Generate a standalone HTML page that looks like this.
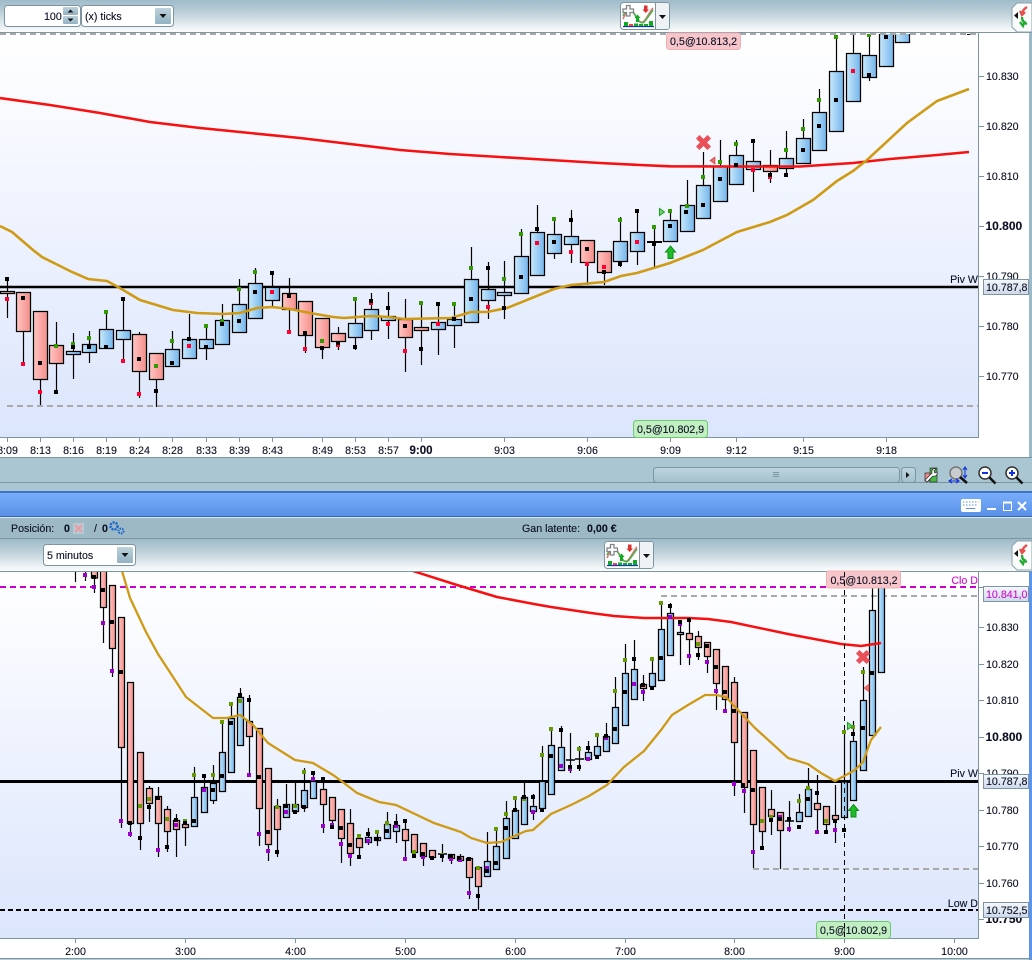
<!DOCTYPE html>
<html><head><meta charset="utf-8"><title>Chart</title>
<style>
html,body{margin:0;padding:0;background:#fff;width:1032px;height:960px;overflow:hidden}
svg{display:block}
text{font-family:"Liberation Sans",sans-serif;font-size:10.67px;fill:#0c1024;stroke:#0c1024;stroke-width:.12}
.b{font-weight:bold}
.t rect{width:14px;stroke:#000;stroke-width:1.25}
.m rect{width:6px;stroke:#000;stroke-width:1.25}
</style></head><body>
<svg width="1032" height="960" viewBox="0 0 1032 960" xmlns="http://www.w3.org/2000/svg">
<defs>
<linearGradient id="hd" x1="0" y1="0" x2="0" y2="1"><stop offset="0" stop-color="#9fbbca"/><stop offset=".35" stop-color="#b9cdd7"/><stop offset="1" stop-color="#fcfdfd"/></linearGradient>
<linearGradient id="bg" x1="0" y1="0" x2="0" y2="1"><stop offset="0" stop-color="#fff"/><stop offset="1" stop-color="#dbe5fc"/></linearGradient>
<linearGradient id="blu" x1="0" y1="0" x2="1" y2="0"><stop offset="0" stop-color="#c9e9fc"/><stop offset="1" stop-color="#74b5ec"/></linearGradient>
<linearGradient id="red" x1="0" y1="0" x2="1" y2="0"><stop offset="0" stop-color="#ffc4c2"/><stop offset="1" stop-color="#f58e8a"/></linearGradient>
<linearGradient id="ttl" x1="0" y1="0" x2="0" y2="1"><stop offset="0" stop-color="#79aefc"/><stop offset="1" stop-color="#5a90e6"/></linearGradient>
<linearGradient id="btn" x1="0" y1="0" x2="0" y2="1"><stop offset="0" stop-color="#bcd2dc"/><stop offset="1" stop-color="#92b2c2"/></linearGradient>
<linearGradient id="tag" x1="0" y1="0" x2="0" y2="1"><stop offset="0" stop-color="#f6f8fc"/><stop offset="1" stop-color="#ccd8ea"/></linearGradient>
<linearGradient id="bar" x1="0" y1="0" x2="0" y2="1"><stop offset="0" stop-color="#bdd5df"/><stop offset="1" stop-color="#a3c0cd"/></linearGradient>
<clipPath id="c1"><rect x="0" y="34" width="978" height="403"/></clipPath>
<clipPath id="c2"><rect x="0" y="572" width="978" height="366"/></clipPath>
</defs>

<!-- base -->
<rect width="1032" height="960" fill="#fff"/>
<rect x="1029" y="33" width="3" height="459" fill="#9ab8c6"/>
<rect x="0" y="0" width="1032" height="32" fill="url(#hd)"/>
<rect x="0" y="32" width="1032" height="1" fill="#7d94a1"/>
<rect x="0" y="34" width="978" height="403" fill="url(#bg)"/>
<rect x="0" y="458" width="1032" height="35" fill="#aac6d2"/>
<rect x="0" y="457" width="1032" height="1" fill="#7d94a1"/>
<rect x="0" y="482" width="1032" height="1" fill="#7d94a1"/>
<rect x="0" y="491" width="1032" height="2" fill="#3f74c4"/>
<rect x="0" y="493" width="1032" height="23" fill="url(#ttl)"/>
<rect x="0" y="516" width="1032" height="1" fill="#2f66bd"/>
<rect x="0" y="517" width="1032" height="1" fill="#dfe9f0"/>
<rect x="0" y="518" width="1032" height="20" fill="#9db9c6"/>
<rect x="0" y="538" width="1032" height="1" fill="#7d94a1"/>
<rect x="0" y="539" width="1032" height="32" fill="url(#hd)"/>
<rect x="0" y="571" width="1032" height="1" fill="#7d94a1"/>
<rect x="0" y="572" width="978" height="366" fill="url(#bg)"/>
<rect x="1029" y="572" width="3" height="388" fill="#5c94ea"/>
<rect x="0" y="958" width="1032" height="1" fill="#7d94a1"/>
<rect x="0" y="959" width="1029" height="1" fill="#b4cad4"/>
<path d="M978.500 33V437.500H0M978.500 572V938.500H0" fill="none" stroke="#7d94a3"/>

<!-- top toolbar -->
<rect x="4.500" y="5.500" width="76" height="21" rx="3" fill="#fff" stroke="#7d94a1"/>
<text x="44" y="20">100</text>
<rect x="63" y="7" width="15" height="8" rx="1" fill="url(#btn)"/><rect x="63" y="16" width="15" height="8" rx="1" fill="url(#btn)"/>
<path d="M67.500 12.500l3-3 3 3zM67.500 18.500h6l-3 3z" fill="#111"/>
<rect x="81.500" y="5.500" width="92" height="21" rx="3" fill="#fff" stroke="#7d94a1"/>
<text x="85" y="20">(x) ticks</text>
<rect x="155" y="8" width="16" height="16" rx="1" fill="url(#btn)"/>
<path d="M159.500 14h7l-3.500 4z" fill="#111"/>

<!-- indicator button top -->
<g id="ib">
<rect x="620.500" y="2.500" width="49" height="27" rx="3" fill="#fff" stroke="#7d94a1"/>
<rect x="656" y="3" width="13" height="26" rx="2" fill="#eef2f4"/><path d="M655.500 3v26" stroke="#7d94a1"/>
<path d="M659 15h7l-3.500 4z" fill="#111"/>
<path d="M623 26.500h31" stroke="#1133cc" stroke-width="1.300"/>
<path d="M624 26V22h4v4zM634 26V23.500h4v2.500zM639 26V24h4v2zM644 26V24h4v2zM649 26V21h4v5z" fill="#11aa22"/>
<path d="M629 26V24h4v2z" fill="#e44"/>
<path d="M623 19c4-10 8-12 12-4s7 9 10 5 6-10 8-12" fill="none" stroke="#e67070" stroke-width="1.600"/>
<path d="M623 16c4-9 8-8 12-1s7 10 10 6 6-8 8-11" fill="none" stroke="#4fb24f" stroke-width="1.600"/>
<path d="M626.500 5.500h3.500v3.500h3.500v3.500H630v3.500h-3.500V12.500H623V9h3.500z" fill="#fff" stroke="#7e8487" stroke-width="1.300"/>
<path d="M634.500 18l3-3.500 3 3.500h-1.500v4h-3v-4z" fill="#11aa22"/>
<path d="M644 5.500h3.500v4h1.500l-3.300 3.500-3.300-3.500h1.600z" fill="#e03030"/>
</g>
<use href="#ib" x="-16" y="539"/>

<!-- right side button top + bottom -->
<g id="sb">
<path d="M1032 3h-15l-5 5v19l5 5h15z" fill="#fafcfc" stroke="#8ba2ae"/>
<path d="M1018 12v7l-4-3.500z" fill="#111"/>
<path d="M1022 15c0-4 2-6 5-8M1020 11l2 4 3-3" fill="none" stroke="#e85050" stroke-width="2.300"/>
<path d="M1022 17c0 4 2 6 5 7M1020 22l3 4 2-5" fill="none" stroke="#22aa33" stroke-width="2.300"/>
</g>
<use href="#sb" x="0" y="538"/>

<!-- TOP CHART -->
<g clip-path="url(#c1)">
<path d="M0 287H978" stroke="#000" stroke-width="2.400"/>
<path d="M7 406H978" stroke="#a9a9a9" stroke-width="2" stroke-dasharray="6 4"/>
<g transform="translate(.5 0)"><path stroke="#000" stroke-width="1.200" fill="none" d="M7 277V318M23 332V363M40 380V405M56 322V393M73 333V379M89 331V363M106 312V329M123 298V362M139 332V398M156 354V407M172 331V350M189 314V340M206 326V360M222 304V321M239 279V305M255 268V284M272 273V306M289 278V332M305 336V353M322 348V359M338 327V350M355 299V350M371 293V340M388 292V339M405 299V372M421 303V365M438 303V355M454 303V348M471 247V280M488 262V319M504 261V319M521 229V257M537 205V233M554 217V259M571 210V263M587 263V285M604 273V285M620 217V267M637 210V265M654 225V268M670 211V221M687 180V206M703 152V186M720 140V167M736 140V156M753 140V192M770 150V183M786 131V173M803 119V139M819 89V113M836 35V72M853 33V54M869 33V81"/></g>
<path d="M647 242h15" stroke="#000" stroke-width="2"/>
<g class="t" transform="translate(-6.500 0)" fill="url(#red)">
<rect x="7" y="291.500" height="2"/><rect x="23" y="292.500" height="39"/><rect x="40" y="311.500" height="68"/><rect x="56" y="345.500" height="18"/><rect x="139" y="334.500" height="37"/><rect x="156" y="353.500" height="26"/><rect x="289" y="293.500" height="16"/><rect x="305" y="301.500" height="34"/><rect x="322" y="318.500" height="29"/><rect x="338" y="333.500" height="8"/><rect x="405" y="319.500" height="18"/><rect x="421" y="327.500" height="3"/><rect x="587" y="240.500" height="22"/><rect x="604" y="251.500" height="21"/><rect x="770" y="165.500" height="6"/>
</g>
<g class="t" transform="translate(-6.500 0)" fill="url(#blu)">
<rect x="73" y="351.500" height="3"/><rect x="89" y="344.500" height="8"/><rect x="106" y="329.500" height="19"/><rect x="123" y="330.500" height="9"/><rect x="172" y="349.500" height="17"/><rect x="189" y="339.500" height="19"/><rect x="206" y="339.500" height="9"/><rect x="222" y="320.500" height="24"/><rect x="239" y="304.500" height="28"/><rect x="255" y="283.500" height="35"/><rect x="272" y="287.500" height="13"/><rect x="355" y="323.500" height="14"/><rect x="371" y="309.500" height="21"/><rect x="388" y="316.500" height="4"/><rect x="438" y="322.500" height="7"/><rect x="454" y="319.500" height="6"/><rect x="471" y="279.500" height="43"/><rect x="488" y="289.500" height="11"/><rect x="504" y="292.500" height="3"/><rect x="521" y="256.500" height="37"/><rect x="537" y="232.500" height="43"/><rect x="554" y="234.500" height="19"/><rect x="571" y="236.500" height="8"/><rect x="620" y="241.500" height="20"/><rect x="637" y="232.500" height="19"/><rect x="670" y="220.500" height="21"/><rect x="687" y="205.500" height="26"/><rect x="703" y="185.500" height="33"/><rect x="720" y="166.500" height="35"/><rect x="736" y="155.500" height="29"/><rect x="753" y="161.500" height="8"/><rect x="786" y="158.500" height="10"/><rect x="803" y="138.500" height="25"/><rect x="819" y="112.500" height="38"/><rect x="836" y="71.500" height="60"/><rect x="853" y="53.500" height="48"/><rect x="869" y="55.500" height="22"/><rect x="886" y="25" height="41.500"/><rect x="902" y="25" height="17.500"/>
</g>
<path d="M0 98L50 105 100 113 150 122 200 128 250 133 300 138 350 144 400 150 450 154 500 157 550 160 600 163 640 165 670 166.300 735 166.500 800 166.500 853 163 890 159 937 155 969 152" fill="none" stroke="#f81010" stroke-width="2.600"/>
<path d="M0 226L12 232 33 250 42 257 72 272 88 279 107 281 118 287 140 300 173 310 197 313 223 314 240 313 257 308 272 307 290 309 310 313 333 317 344 318 371 316 389 317 404 319 451 318 471 312 487 312 507 308 554 289 571 285 604 282 621 276 637 273 670 263 703 250 737 232 770 222 787 215 813 200 837 181 853 171 867 160 907 123 937 101 969 89" fill="none" stroke="#cf9a14" stroke-width="2.600"/>
<g transform="translate(-2 0)" fill="none" stroke-width="4">
<path stroke="#339900" d="M56 346h4M73 344h4M89 338h4M106 312h4M156 366h4M172 341h4M206 326h4M222 321h4M239 289h4M255 272h4M322 341h4M355 299h4M421 303h4M454 304h4M471 268h4M504 279h4M521 234h4M554 219h4M620 220h4M654 227h4M670 211h4M687 206h4M703 177h4M720 162h4M736 144h4M786 150h4M803 129h4M819 100h4M836 37h4M869 35h4"/>
<path stroke="#ff0033" d="M7 299h4M23 364h4M40 392h4M123 361h4M139 394h4M189 346h4M272 292h4M289 332h4M305 349h4M338 345h4M371 303h4M388 324h4M405 351h4M438 324h4M488 307h4M537 243h4M571 252h4M587 264h4M604 267h4M637 242h4M753 170h4M770 177h4M853 71h4"/>
<path stroke="#000" d="M7 279h4M23 298h4M40 363h4M56 392h4M73 347h4M89 347h4M106 347h4M123 299h4M139 359h4M156 391h4M172 363h4M189 339h4M206 347h4M222 324h4M239 321h4M255 292h4M272 273h4M289 296h4M305 333h4M322 348h4M338 343h4M355 347h4M371 301h4M388 308h4M405 326h4M421 349h4M438 304h4M454 319h4M471 299h4M488 268h4M504 308h4M521 277h4M537 229h4M554 242h4M571 220h4M587 249h4M604 272h4M620 264h4M637 211h4M654 244h4M670 226h4M686 212h4M703 205h4M720 179h4M736 165h4M753 141h4M770 175h4M786 175h4M803 150h4M819 126h4M836 100h4M853 33h4M869 75h4M886 37h4M969 33h4"/>
</g>
<path d="M699.500 138.500l8 8M707.500 138.500l-8 8" stroke="#ea5058" stroke-width="5" stroke-linecap="square"/>
<path d="M715 157v7l-5-3.500z" fill="#f06a6a" stroke="#c83a3a" stroke-width=".6"/>
<path d="M659.500 208.500v7l5-3.500z" fill="#6fd66f" stroke="#1e9e1e"/>
<path d="M670.500 246l5 6h-2.500v6.500h-5V252h-2.500z" fill="#20bb28" stroke="#0c8f14"/>
</g>
<path d="M0 34H978" stroke="#a9a9a9" stroke-width="2" stroke-dasharray="6 4"/>
<rect x="666.500" y="33" width="74" height="16.500" rx="3" fill="#f7c6ca" stroke="#f0b0b6"/>
<text x="670" y="45">0,5@10.813,2</text>
<rect x="633.500" y="420.500" width="74" height="17" rx="3" fill="#c2efc2" stroke="#70c870"/>
<text x="637" y="433">0,5@10.802,9</text>
<text x="978" y="283" text-anchor="end">Piv W</text>

<!-- top axis -->
<path d="M979 76.500h5M979 126.500h5M979 176.500h5M979 226.500h5M979 276.500h5M979 326.500h5M979 376.500h5" stroke="#7d94a3"/>
<text x="986" y="80">10.830</text><text x="986" y="130">10.820</text><text x="986" y="180">10.810</text><text x="985.500" y="230" class="b" style="font-size:12px">10.800</text><text x="986" y="280">10.790</text><text x="986" y="330">10.780</text><text x="986" y="380">10.770</text>
<rect x="983.500" y="279.500" width="45" height="15" fill="url(#tag)" stroke="#7d94a6"/>
<text x="986" y="291">10.787,8</text>
<path d="M7.500 438v4M40.500 438v4M73.500 438v4M106.500 438v4M139.500 438v4M172.500 438v4M206.500 438v4M239.500 438v4M272.500 438v4M322.500 438v4M355.500 438v4M388.500 438v4M421.500 438v4M504.500 438v4M587.500 438v4M670.500 438v4M736.500 438v4M803.500 438v4M886.500 438v4" stroke="#7d94a3"/>
<g text-anchor="middle">
<text x="7.500" y="454">8:09</text><text x="40.500" y="454">8:13</text><text x="73.500" y="454">8:16</text><text x="106.500" y="454">8:19</text><text x="139.500" y="454">8:24</text><text x="172.500" y="454">8:28</text><text x="206.500" y="454">8:33</text><text x="239.500" y="454">8:39</text><text x="272.500" y="454">8:43</text><text x="322.500" y="454">8:49</text><text x="355.500" y="454">8:53</text><text x="388.500" y="454">8:57</text><text x="421" y="454" class="b" style="font-size:11.500px">9:00</text><text x="504.500" y="454">9:03</text><text x="587.500" y="454">9:06</text><text x="670.500" y="454">9:09</text><text x="736.500" y="454">9:12</text><text x="803.500" y="454">9:15</text><text x="886.500" y="454">9:18</text>
</g>

<!-- scrollbar / tools -->
<rect x="653.500" y="467.500" width="246" height="15" rx="3" fill="url(#bar)" stroke="#7d94a1"/>
<path d="M773 472.500h6M773 474.500h6M773 476.500h6" stroke="#7d94a1"/>
<rect x="901.500" y="467.500" width="14" height="15" rx="3" fill="url(#bar)" stroke="#7d94a1"/>
<path d="M906 472v6l3.500-3z" fill="#111"/>
<path d="M925 473h6v8h-6z" fill="#e88" stroke="#333" stroke-width=".7"/>
<path d="M930 468h7v14h-7z" fill="#44bb44" stroke="#333" stroke-width=".7"/>
<path d="M925 480l7-7c-1-4 2-5 4-4l-2 2 1 2 2-1c1 3-2 5-4 4l-6 6z" fill="#fff" stroke="#333" stroke-width=".8"/>
<circle cx="956" cy="473" r="6" fill="#c8ccd0" stroke="#777" stroke-width="1.500"/>
<path d="M960 477l7 6" stroke="#111" stroke-width="2.500"/>
<path d="M965 468v9M963 470l2-3 2 3M963 475l2 3 2-3M950 481h8M952 479l-3 2 3 2M956 479l3 2-3 2" fill="none" stroke="#1133dd" stroke-width="1.100"/>
<circle cx="985" cy="473" r="6" fill="#fff" stroke="#333" stroke-width="1.500"/>
<path d="M982 473h6" stroke="#1133dd" stroke-width="2"/><path d="M989.500 477.500l6 6" stroke="#111" stroke-width="2.500"/>
<circle cx="1012" cy="473" r="6" fill="#fff" stroke="#333" stroke-width="1.500"/>
<path d="M1009 473h6M1012 470v6" stroke="#1133dd" stroke-width="2"/><path d="M1016.500 477.500l6 6" stroke="#111" stroke-width="2.500"/>

<!-- title bar icons -->
<rect x="961" y="499" width="20" height="13" rx="2" fill="#fff"/>
<path d="M963 502h1.500M966 502h1.500M969 502h1.500M972 502h1.500M975 502h1.500M978 502h.5M963 505h1.500M966 505h1.500M969 505h1.500M972 505h1.500M975 505h1.500M966 508.500h9" stroke="#5a90e6"/>
<path d="M987 509h9" stroke="#fff" stroke-width="2"/>
<rect x="1003.500" y="502.500" width="8" height="8" fill="none" stroke="#fff"/><path d="M1003 502.500h9" stroke="#fff" stroke-width="2"/>
<path d="M1018 502l8 8M1026 502l-8 8" stroke="#fff" stroke-width="2"/>

<!-- position row -->
<text x="11" y="532">Posición:</text><text x="64" y="532" class="b">0</text>
<rect x="73" y="523" width="11" height="11" fill="#b5cbd5"/><path d="M75 525l7 7M82 525l-7 7" stroke="#e8a0a8" stroke-width="2.500"/>
<text x="94" y="532">/</text><text x="102" y="532" class="b">0</text>
<circle cx="114" cy="526" r="3.500" fill="none" stroke="#1a66cc" stroke-width="2.500" stroke-dasharray="2 1"/><circle cx="121" cy="531" r="2.500" fill="none" stroke="#1a66cc" stroke-width="2" stroke-dasharray="1.500 1"/>
<text x="522" y="532">Gan latente:</text><text x="587" y="532" class="b">0,00 €</text>

<!-- bottom dropdown -->
<rect x="43.500" y="544.500" width="92" height="21" rx="3" fill="#fff" stroke="#7d94a1"/>
<text x="47" y="559">5 minutos</text>
<rect x="117" y="547" width="16" height="16" rx="1" fill="url(#btn)"/>
<path d="M121.500 553h7l-3.500 4z" fill="#111"/>

<!-- BOTTOM CHART -->
<g clip-path="url(#c2)">
<path d="M0 781.500H978" stroke="#000" stroke-width="3"/>
<path d="M0 587H978" stroke="#cc00cc" stroke-width="2" stroke-dasharray="6 4"/>
<path d="M661 596H978M753 869H978" stroke="#a9a9a9" stroke-width="2" stroke-dasharray="6 4"/>
<path d="M0 910H978" stroke="#000" stroke-width="2" stroke-dasharray="5 3"/>
<g transform="translate(.5 0)"><path stroke="#000" stroke-width="1.200" fill="none" d="M75 560V582M85 560V581M94 578V593M103 607V643M112 648V677M121 747V828M130 823V837M140 823V850M149 786V822M158 787V857M167 806V852M176 814V857M185 820V846M194 767V827M204 775V788M213 765V804M222 720V753M231 702V719M240 688V698M249 695V777M259 808V846M268 844V861M277 799V857M286 784V805M295 782V814M304 768V812M313 775V782M323 778V833M332 820V828M341 838V863M350 809V866M359 835V855M368 828V845M377 830V846M387 812V825M396 814V843M405 822V858M414 852V855M423 856V866M432 857V860M442 844V862M451 854V864M460 854V862M469 857V899M478 886V910M487 832V862M496 828V847M506 801V819M515 798V811M524 782V798M533 794V820M542 746V782M551 729V746M561 726V748M570 733V773M579 746V771M588 741V760M597 735V757M606 723V737M615 677V708M625 644V674M634 640V670M643 675V701M652 660V674M661 603V630M670 603V614M680 620V665M689 618V665M698 631V660M707 656V673M716 683V710M725 699V713M734 677V796M744 787V813M753 824V868M762 831V848M771 790V835M780 830V869M789 801V832M799 794V822M808 768V790M817 775V833M826 824V832M835 785V843M844 733V818M853 721V742M863 667V701M872 588V611"/></g>
<path d="M438 854h9M566 760h9M575 759h9M785 821h9" stroke="#000" stroke-width="1.500"/>
<g class="m" transform="translate(-2.500 0)" fill="url(#red)">
<rect x="94" y="560" height="18"/><rect x="103" y="560" height="47.500"/><rect x="112" y="585.500" height="63"/><rect x="121" y="617.500" height="130"/><rect x="130" y="682.500" height="141"/><rect x="140" y="752.500" height="71"/><rect x="149" y="788.500" height="15"/><rect x="158" y="796.500" height="27"/><rect x="167" y="809.500" height="22"/><rect x="176" y="820.500" height="9"/><rect x="185" y="824.500" height="3"/><rect x="249" y="721.500" height="15"/><rect x="259" y="728.500" height="80"/><rect x="268" y="768.500" height="76"/><rect x="277" y="806.500" height="23"/><rect x="323" y="789.500" height="15"/><rect x="332" y="797.500" height="23"/><rect x="341" y="809.500" height="29"/><rect x="350" y="823.500" height="30"/><rect x="359" y="838.500" height="9"/><rect x="405" y="829.500" height="11"/><rect x="414" y="834.500" height="18"/><rect x="423" y="843.500" height="13"/><rect x="432" y="850.500" height="7"/><rect x="451" y="854.500" height="4"/><rect x="460" y="856.500" height="4"/><rect x="469" y="858.500" height="19"/><rect x="478" y="867.500" height="19"/><rect x="643" y="684.500" height="4"/><rect x="689" y="633.500" height="6"/><rect x="698" y="636.500" height="11"/><rect x="707" y="642.500" height="14"/><rect x="716" y="649.500" height="34"/><rect x="725" y="666.500" height="33"/><rect x="734" y="682.500" height="60"/><rect x="744" y="712.500" height="75"/><rect x="753" y="750.500" height="74"/><rect x="762" y="787.500" height="44"/><rect x="771" y="809.500" height="7"/><rect x="780" y="812.500" height="18"/><rect x="817" y="803.500" height="6"/><rect x="826" y="806.500" height="18"/><rect x="835" y="815.500" height="4"/>
</g>
<g class="m" transform="translate(-2.500 0)" fill="url(#blu)">
<rect x="194" y="797.500" height="29"/><rect x="204" y="787.500" height="25"/><rect x="213" y="783.500" height="17"/><rect x="222" y="752.500" height="39"/><rect x="231" y="718.500" height="54"/><rect x="240" y="697.500" height="48"/><rect x="286" y="804.500" height="13"/><rect x="295" y="804.500" height="7"/><rect x="304" y="790.500" height="17"/><rect x="313" y="781.500" height="17"/><rect x="368" y="837.500" height="5"/><rect x="377" y="837.500" height="3"/><rect x="387" y="824.500" height="14"/><rect x="396" y="825.500" height="6"/><rect x="487" y="861.500" height="15"/><rect x="496" y="846.500" height="23"/><rect x="506" y="818.500" height="40"/><rect x="515" y="810.500" height="28"/><rect x="524" y="797.500" height="27"/><rect x="533" y="806.500" height="5"/><rect x="542" y="781.500" height="27"/><rect x="551" y="745.500" height="49"/><rect x="561" y="747.500" height="23"/><rect x="588" y="752.500" height="7"/><rect x="597" y="746.500" height="9"/><rect x="606" y="736.500" height="15"/><rect x="615" y="707.500" height="36"/><rect x="625" y="673.500" height="52"/><rect x="634" y="669.500" height="30"/><rect x="652" y="673.500" height="13"/><rect x="661" y="629.500" height="51"/><rect x="670" y="613.500" height="42"/><rect x="680" y="632.500" height="2"/><rect x="799" y="812.500" height="9"/><rect x="808" y="789.500" height="27"/><rect x="844" y="782" height="35.500"/><rect x="853" y="741.500" height="59"/><rect x="863" y="700.500" height="70"/><rect x="872" y="610.500" height="125"/><rect x="881" y="560" height="112.500"/>
</g>
<path d="M410 570L416 572 457 585 497 597 534 604 551 607 591 613 614 616 644 618 688 618 708 619 731 622 788 634 841 644 861 646 881 643" fill="none" stroke="#f81010" stroke-width="2.500"/>
<path d="M118 562L122 571 130 598 146 632 158 654 175 680 186 697 213 718 227 718 240 715 253 725 268 743 295 760 313 763 333 775 344 783 357 793 379 802 396 805 434 823 461 832 471 838 487 843 501 842 526 831 533 830 551 814 571 805 589 796 607 785 624 767 644 751 661 730 672 715 688 705 705 695 716 695 726 697 738 710 755 728 788 758 808 764 821 773 835 781 855 770 863 762 871 740 881 727" fill="none" stroke="#cf9a14" stroke-width="2.300"/>
<g transform="translate(-2 0)" fill="none" stroke-width="4">
<path stroke="#669900" d="M140 806h4M149 799h4M167 819h4M185 821h4M194 775h4M213 775h4M222 722h4M231 704h4M240 701h4M277 807h4M295 806h4M304 772h4M359 836h4M377 832h4M387 823h4M414 852h4M442 855h4M478 868h4M496 829h4M506 814h4M515 798h4M524 799h4M542 755h4M551 729h4M579 749h4M597 735h4M615 691h4M625 660h4M652 659h4M661 603h4M698 644h4M762 821h4M771 817h4M799 801h4M808 788h4M826 821h4M844 732h4M853 727h4M863 672h4"/>
<path stroke="#9900cc" d="M85 575h4M94 587h4M103 623h4M112 671h4M121 821h4M130 834h4M158 850h4M176 825h4M204 790h4M249 775h4M259 834h4M268 851h4M286 812h4M313 779h4M323 826h4M332 825h4M341 844h4M350 856h4M368 841h4M396 826h4M405 859h4M423 857h4M451 859h4M460 860h4M469 893h4M487 868h4M533 812h4M561 766h4M570 769h4M588 759h4M606 738h4M634 684h4M643 692h4M670 617h4M680 624h4M689 656h4M707 662h4M716 691h4M725 711h4M734 784h4M744 791h4M753 852h4M780 817h4M789 829h4M817 832h4M835 830h4"/>
<path stroke="#000" d="M94 577h4M103 590h4M112 622h4M121 672h4M130 823h4M140 838h4M149 807h4M158 798h4M167 847h4M176 820h4M185 823h4M194 821h4M204 776h4M213 790h4M222 776h4M231 723h4M240 695h4M249 700h4M259 777h4M268 832h4M277 852h4M286 806h4M295 812h4M304 807h4M313 773h4M323 779h4M332 827h4M341 828h4M350 845h4M359 857h4M368 834h4M377 839h4M387 831h4M396 823h4M405 821h4M414 856h4M423 854h4M432 858h4M442 856h4M451 856h4M459 858h4M469 859h4M478 896h4M487 871h4M496 863h4M506 828h4M515 810h4M524 797h4M533 797h4M542 810h4M551 756h4M561 730h4M570 767h4M579 767h4M588 748h4M597 757h4M606 736h4M615 729h4M625 692h4M634 659h4M643 685h4M652 688h4M661 658h4M670 606h4M680 622h4M689 620h4M698 655h4M707 646h4M716 667h4M725 692h4M734 711h4M743 785h4M753 790h4M762 848h4M771 820h4M780 819h4M789 819h4M799 827h4M808 799h4M817 793h4M826 832h4M835 821h4M844 830h4M853 734h4M863 728h4M872 673h4"/>
</g>
<path d="M859.500 653.500l7 7M866.500 653.500l-7 7" stroke="#ea5058" stroke-width="5" stroke-linecap="square"/>
<path d="M869 684v8l-5-4z" fill="#f06a6a" stroke="#e05050" stroke-width=".6"/>
<path d="M847.500 722.500v7l5-3.500z" fill="#6fd66f" stroke="#1e9e1e"/>
<path d="M853.500 804.500l5 6h-2.500v6.500h-5V810.500h-2.500z" fill="#20bb28" stroke="#0c8f14"/>
</g>
<rect x="826.500" y="571" width="74" height="17" rx="2" fill="#f7c6ca" stroke="#f0b0b6"/>
<text x="830.500" y="584">0,5@10.813,2</text>
<rect x="816.500" y="921.500" width="74" height="17" rx="3" fill="#c2efc2" stroke="#70c870"/>
<text x="820" y="934">0,5@10.802,9</text>
<path d="M844.500 572V938" stroke="#000" stroke-dasharray="5 4"/>
<text x="978" y="584" text-anchor="end" style="fill:#d010d0;stroke:#d010d0">Clo D</text>
<text x="978" y="777" text-anchor="end">Piv W</text>
<text x="978" y="907" text-anchor="end">Low D</text>

<!-- bottom axis -->
<path d="M979 587.500h5M979 627.500h5M979 664.500h5M979 700.500h5M979 737.500h5M979 773.500h5M979 810.500h5M979 846.500h5M979 883.500h5M979 919.500h5" stroke="#7d94a3"/>
<text x="986" y="631">10.830</text><text x="986" y="668">10.820</text><text x="986" y="704">10.810</text><text x="985.500" y="741" class="b" style="font-size:12px">10.800</text><text x="986" y="777">10.790</text><text x="986" y="814">10.780</text><text x="986" y="850">10.770</text><text x="986" y="887">10.760</text><text x="985.500" y="923" class="b" style="font-size:12px">10.750</text>
<rect x="983.500" y="586.500" width="45" height="15" fill="url(#tag)" stroke="#7d94a6"/>
<text x="986" y="598" style="fill:#d010d0;stroke:#d010d0">10.841,0</text>
<rect x="983.500" y="774.500" width="45" height="14" fill="url(#tag)" stroke="#7d94a6"/>
<text x="986" y="785">10.787,8</text>
<rect x="983.500" y="902.500" width="45" height="15" fill="url(#tag)" stroke="#7d94a6"/>
<text x="986" y="914">10.752,5</text>
<path d="M75.500 939v4M185.500 939v4M295.500 939v4M405.500 939v4M515.500 939v4M625.500 939v4M734.500 939v4M844.500 939v4M954.500 939v4" stroke="#7d94a3"/>
<g text-anchor="middle">
<text x="75.500" y="955">2:00</text><text x="185.500" y="955">3:00</text><text x="295.500" y="955">4:00</text><text x="405.500" y="955">5:00</text><text x="515.500" y="955">6:00</text><text x="625.500" y="955">7:00</text><text x="734.500" y="955">8:00</text><text x="844.500" y="955">9:00</text><text x="954.500" y="955">10:00</text>
</g>
</svg>
</body></html>
